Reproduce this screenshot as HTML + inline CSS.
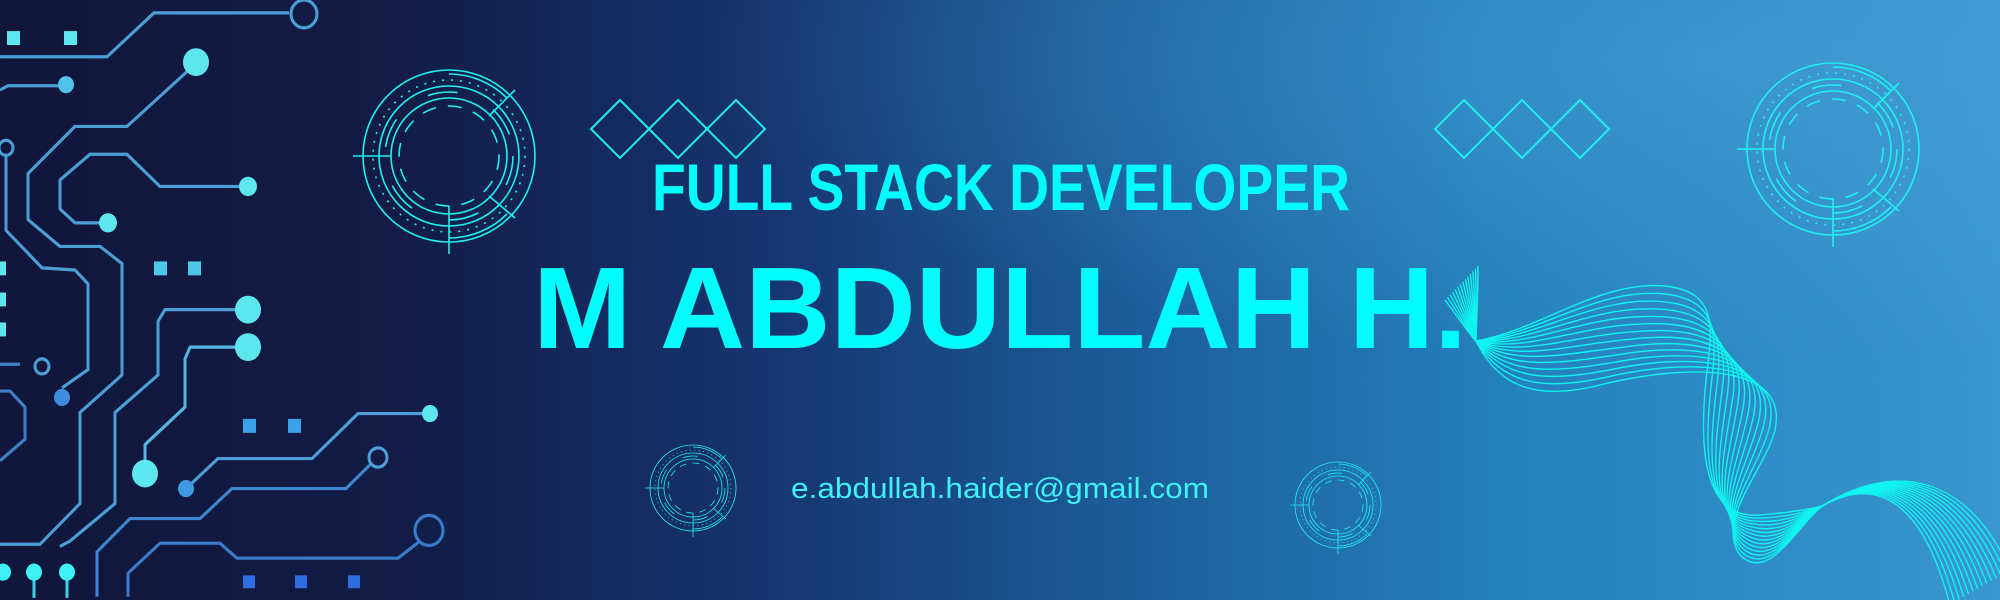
<!DOCTYPE html>
<html><head><meta charset="utf-8"><style>
html,body{margin:0;padding:0;width:2000px;height:600px;overflow:hidden}
svg{display:block}
</style></head><body>
<svg width="2000" height="600" viewBox="0 0 2000 600" xmlns="http://www.w3.org/2000/svg">
<defs>
<linearGradient id="bg" x1="0" y1="0" x2="1" y2="0">
<stop offset="0" stop-color="#11163a"/>
<stop offset="0.2" stop-color="#121c46"/>
<stop offset="0.38" stop-color="#16346f"/>
<stop offset="0.55" stop-color="#1b5a96"/>
<stop offset="0.75" stop-color="#2480bb"/>
<stop offset="1" stop-color="#3a96cf"/>
</linearGradient>
<radialGradient id="gl" cx="0.85" cy="0.1" r="0.5">
<stop offset="0" stop-color="#4aa3d8" stop-opacity="0.5"/>
<stop offset="1" stop-color="#4aa3d8" stop-opacity="0"/>
</radialGradient>
<g id="ring" fill="none" stroke="#1ef0f0" stroke-width="1.6">
<circle r="86"/>
<circle r="76" stroke-dasharray="2 7"/>
<circle r="70"/>
<circle r="58"/>
<circle r="50" stroke-dasharray="14 12"/>
<circle r="64" stroke-dasharray="30 40"/>
<path d="M0,-82 A82,82 0 0 1 58,-58 M58,58 A82,82 0 0 1 0,82"/>
<path d="M-96,0 L-58,0 M0,50 L0,98 M40,-40 L66,-66 M40,40 L66,62"/>
</g>
</defs>
<rect width="2000" height="600" fill="url(#bg)"/>
<rect width="2000" height="600" fill="url(#gl)"/>

<!-- circuit -->
<g transform="scale(1,1.0714)">
<g fill="none" stroke="#4b9ed6" stroke-width="3" stroke-linejoin="round">
<path d="M0,53 L107,53 L154,12 L289,12"/>
<path d="M0,84 L8,80 L60,80"/>
<path d="M188,66 L127,118 L75,118 L28,162 L28,205 L60,230 L100,230 L122,246 L122,350 L80,385 L80,470 L40,508 L0,508"/>
<path d="M6,144 L6,215 L42,250 L75,252 L88,265 L88,345 L62,362"/>
<path d="M248,174 L160,174 L127,144 L90,144 L60,168 L60,195 L75,208 L108,208"/>
<path d="M248,289 L165,289 L158,300 L158,350 L115,385 L115,470 L70,505 L60,510"/>
<path d="M248,324 L190,324 L185,335 L185,380 L145,415 L145,440" stroke="#55b6e0"/>
<path d="M186,456 L218,428 L312,428 L358,386 L430,386"/>
<path d="M372,432 L346,456 L232,456 L200,484 L130,484 L97,515 L97,557" stroke="#3f86d0"/>
<path d="M420,505 L398,521 L237,521 L220,507 L160,507 L128,535 L128,557" stroke="#3a7ccc"/>
<path d="M0,340 L20,340 M0,365 L10,365 L25,380 L25,410 L0,430" stroke="#3d80c8"/>
<circle cx="304" cy="13" r="13"/>
<circle cx="6" cy="138" r="7"/>
<circle cx="42" cy="342" r="7"/>
<circle cx="378" cy="427" r="9"/>
<circle cx="429" cy="495" r="14" stroke="#3a7ccc"/>
<path d="M34,534 L34,558 M67,534 L67,558" stroke="#3fd0e8"/>
</g>
<g fill="#5ee6ee">
<circle cx="66" cy="79" r="8" fill="#4fc3e8"/>
<circle cx="196" cy="58" r="13"/>
<circle cx="248" cy="174" r="9"/>
<circle cx="108" cy="208" r="9"/>
<circle cx="248" cy="289" r="13"/>
<circle cx="248" cy="324" r="13"/>
<circle cx="145" cy="442" r="13"/>
<circle cx="62" cy="371" r="8" fill="#3d8ee0"/>
<circle cx="186" cy="456" r="8" fill="#3d9ae0"/>
<circle cx="430" cy="386" r="8"/>
<circle cx="3" cy="534" r="8" fill="#3ff0f5"/>
<circle cx="34" cy="534" r="8" fill="#3ff0f5"/>
<circle cx="67" cy="534" r="8" fill="#3ff0f5"/>
<rect x="7" y="29" width="13" height="13"/>
<rect x="64" y="29" width="13" height="13"/>
<rect x="154" y="244" width="13" height="13" fill="#4ec8ea"/>
<rect x="188" y="244" width="13" height="13" fill="#4ec8ea"/>
<rect x="0" y="244" width="6" height="13"/>
<rect x="0" y="273" width="6" height="13"/>
<rect x="0" y="301" width="6" height="13"/>
<rect x="243" y="391" width="13" height="13" fill="#3aa2e8"/>
<rect x="288" y="391" width="13" height="13" fill="#3aa2e8"/>
<rect x="243" y="537" width="12" height="12" fill="#2f6ee0"/>
<rect x="295" y="537" width="12" height="12" fill="#2f6ee0"/>
<rect x="348" y="537" width="12" height="12" fill="#2f6ee0"/>
</g>
</g>

<!-- rings -->
<use href="#ring" transform="translate(449,156)"/>
<use href="#ring" transform="translate(1833,149)"/>
<use href="#ring" transform="translate(693,488) scale(0.5)"/>
<use href="#ring" transform="translate(1338,505) scale(0.5)"/>

<!-- diamonds -->
<g fill="none" stroke="#1ef0f0" stroke-width="2">
<path d="M591,129 L620,100 L649,129 L620,158 Z M649,129 L678,100 L707,129 L678,158 Z M707,129 L736,100 L765,129 L736,158 Z"/>
<path d="M1435,129 L1464,100 L1493,129 L1464,158 Z M1493,129 L1522,100 L1551,129 L1522,158 Z M1551,129 L1580,100 L1609,129 L1580,158 Z"/>
</g>

<!-- wave -->
<g id="wave" fill="none" stroke="#10f4f0" stroke-width="1.4"></g>

<!-- text -->
<g font-family="'Liberation Sans', Arial, sans-serif" fill="#00fdfc">
<text x="652" y="210" font-size="66" font-weight="bold" textLength="698" lengthAdjust="spacingAndGlyphs">FULL STACK DEVELOPER</text>
<text x="533" y="348" font-size="116" font-weight="bold" textLength="934" lengthAdjust="spacingAndGlyphs">M ABDULLAH H.</text>
<text x="791" y="498" font-size="29" fill="#3ff2f6" textLength="418" lengthAdjust="spacingAndGlyphs">e.abdullah.haider@gmail.com</text>
</g>
</svg>
<script>
(function(){
var A="M1478,266 C1478,300 1476,330 1476,341 C1540,330 1600,280 1665,286 C1720,292 1712,330 1706,380 C1700,440 1700,520 1760,515 C1790,512 1810,510 1824,505 C1880,470 1960,460 2010,570";
var B="M1445,300 C1460,320 1470,335 1476,341 C1500,390 1540,400 1600,385 C1680,365 1790,360 1775,430 C1765,470 1715,520 1740,555 C1770,585 1800,520 1824,505 C1870,480 1920,490 1950,605";
var na=A.match(/-?\d+(\.\d+)?/g).map(Number), nb=B.match(/-?\d+(\.\d+)?/g).map(Number);
var g=document.getElementById('wave'), n=14, s='';
for(var i=0;i<n;i++){var t=i/(n-1),k=0;
var d=A.replace(/-?\d+(\.\d+)?/g,function(){var v=na[k]+(nb[k]-na[k])*t;k++;return v.toFixed(1);});
s+='<path d="'+d+'"/>';}
g.innerHTML=s;
})();
</script>
</body></html>
